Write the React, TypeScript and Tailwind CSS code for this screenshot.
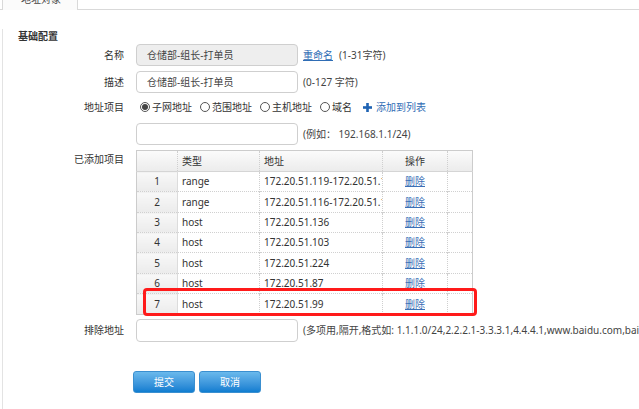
import React from "react";

const rows = [
  { n: 1, t: "range", a: "172.20.51.119-172.20.51.119", h: 20 },
  { n: 2, t: "range", a: "172.20.51.116-172.20.51.116", h: 21 },
  { n: 3, t: "host", a: "172.20.51.136", h: 20 },
  { n: 4, t: "host", a: "172.20.51.103", h: 20 },
  { n: 5, t: "host", a: "172.20.51.224", h: 21 },
  { n: 6, t: "host", a: "172.20.51.87", h: 20 },
  { n: 7, t: "host", a: "172.20.51.99", h: 21 },
];

function Radio({ checked, label }: { checked?: boolean; label: string }) {
  return (
    <span className="flex items-center">
      <span className="w-[10px] h-[10px] rounded-full border border-[#555] bg-white flex items-center justify-center">
        {checked && <span className="w-[6px] h-[6px] rounded-full bg-[#444]" />}
      </span>
      <span className="ml-[2px]">{label}</span>
    </span>
  );
}

function Label({ children, className = "" }: { children: React.ReactNode; className?: string }) {
  return <div className={"w-[124px] shrink-0 text-right " + className}>{children}</div>;
}

export default function App() {
  return (
    <div
      className="w-[639px] h-[409px] bg-white relative overflow-hidden text-[10px] text-[#333]"
      style={{ fontFamily: '"Noto Sans", "Noto Sans CJK SC", sans-serif' }}
    >
      {/* tab strip */}
      <div className="flex h-[10px]">
        <div className="w-[2px] border-b border-[#d9d9d9]" />
        <div className="w-[76px] h-[10px] overflow-hidden border-x border-[#d9d9d9] bg-[#fbfbfb]">
          <div className="-mt-[8px] leading-[14px] text-center pl-[2px] text-[#444]">地址对象</div>
        </div>
        <div className="flex-1 border-b border-[#d9d9d9]" />
      </div>

      <div className="border-l border-[#e3e3e3] ml-[2px] h-[399px]">
        <div className="-ml-[3px]">
          <div className="mt-[19px] leading-[14px] pl-[18px] font-bold text-[#333]">基础配置</div>

          {/* 名称 */}
          <div className="flex items-center mt-[1px] h-[22px]">
            <Label>名称</Label>
            <div className="ml-[12px] shrink-0 w-[162px] h-[22px] rounded-[4px] border border-[#cfcfcf] bg-[#eeeeee] flex items-center pl-[10px] text-[#444]">
              仓储部-组长-打单员
            </div>
            <span className="ml-[5px] text-[#2f6db5] underline">重命名</span>
            <span className="ml-[6px] text-[#444]">(1-31字符)</span>
          </div>

          {/* 描述 */}
          <div className="flex items-center mt-[5px] h-[22px]">
            <Label>描述</Label>
            <div className="ml-[12px] shrink-0 w-[162px] h-[22px] rounded-[4px] border border-[#cfcfcf] bg-white flex items-center pl-[10px] text-[#444]">
              仓储部-组长-打单员
            </div>
            <span className="ml-[5px] text-[#444]">(0-127 字符)</span>
          </div>

          {/* 地址项目 */}
          <div className="flex items-center mt-[5px] h-[18px]">
            <Label>地址项目</Label>
            <div className="ml-[16px] flex items-center gap-[8px]">
              <Radio checked label="子网地址" />
              <Radio label="范围地址" />
              <Radio label="主机地址" />
              <Radio label="域名" />
            </div>
            <svg className="ml-[11px]" width="9" height="9" viewBox="0 0 9 9">
              <rect x="3.2" y="0" width="2.6" height="9" fill="#1f63b3" />
              <rect x="0" y="3.2" width="9" height="2.6" fill="#1f63b3" />
            </svg>
            <span className="ml-[4px] text-[#2f6db5]">添加到列表</span>
          </div>

          {/* subnet input */}
          <div className="flex items-center mt-[7px] h-[22px]">
            <Label>{""}</Label>
            <div className="ml-[12px] shrink-0 w-[162px] h-[22px] rounded-[4px] border border-[#cfcfcf] bg-white" />
            <span className="ml-[5px] text-[#444]">(例如：&nbsp;192.168.1.1/24)</span>
          </div>

          {/* 已添加项目 */}
          <div className="flex mt-[5px]">
            <Label className="pt-[2px] leading-[14px]">已添加项目</Label>
            <div className="ml-[12px] relative shrink-0">
              <table className="border-collapse border border-[#cccccc] table-fixed w-[336px]">
                <colgroup>
                  <col className="w-[41px]" />
                  <col className="w-[82px]" />
                  <col className="w-[123px]" />
                  <col className="w-[65px]" />
                  <col className="w-[25px]" />
                </colgroup>
                <thead>
                  <tr className="h-[21px] bg-gradient-to-b from-[#fbfbfb] to-[#ececec] border-b border-[#d5d5d5]">
                    <th className="border-r border-dotted border-[#cfcfcf]" />
                    <th className="font-normal text-left pl-[4px] border-r border-dotted border-[#cfcfcf]">类型</th>
                    <th className="font-normal text-left pl-[4px] border-r border-dotted border-[#cfcfcf]">地址</th>
                    <th className="font-normal text-center border-r border-dotted border-[#cfcfcf]">操作</th>
                    <th />
                  </tr>
                </thead>
                <tbody>
                  {rows.map((r) => (
                    <tr key={r.n} style={{ height: r.h }} className="border-b border-dotted border-[#d0d0d0]">
                      <td className="text-center bg-gradient-to-b from-[#f8f8f8] to-[#ebebeb] border-r border-solid border-[#dcdcdc] p-0">
                        {r.n}
                      </td>
                      <td className="pl-[4px] border-r border-dotted border-[#cfcfcf] p-0">{r.t}</td>
                      <td className="pl-[4px] border-r border-dotted border-[#cfcfcf] p-0 overflow-hidden whitespace-nowrap">
                        {r.a}
                      </td>
                      <td className="text-center border-r border-dotted border-[#cfcfcf] p-0">
                        <span className="text-[#3b6fb6] underline">删除</span>
                      </td>
                      <td className="p-0" />
                    </tr>
                  ))}
                </tbody>
              </table>
              <div className="absolute left-[7px] top-[138px] w-[334px] h-[28px] border-[3px] border-[#ff1a1a] rounded-[4px]" />
            </div>
          </div>

          {/* 排除地址 */}
          <div className="flex items-center mt-[4px] h-[23px]">
            <Label>排除地址</Label>
            <div className="ml-[12px] shrink-0 w-[162px] h-[23px] rounded-[4px] border border-[#cfcfcf] bg-white" />
            <span className="ml-[5px] text-[#444] whitespace-nowrap">
              (多项用,隔开,格式如: 1.1.1.0/24,2.2.2.1-3.3.3.1,4.4.4.1,www.baidu.com,baidu.com)
            </span>
          </div>

          {/* buttons */}
          <div className="flex mt-[29px] pl-[133px] gap-[4px]">
            <button className="w-[62px] h-[22px] rounded-[3px] border border-[#3a8fd0] bg-gradient-to-b from-[#6ab9ec] to-[#0d7dd0] text-white text-[10px] flex items-center justify-center">
              提交
            </button>
            <button className="w-[62px] h-[22px] rounded-[3px] border border-[#3a8fd0] bg-gradient-to-b from-[#6ab9ec] to-[#0d7dd0] text-white text-[10px] flex items-center justify-center">
              取消
            </button>
          </div>
        </div>
      </div>
    </div>
  );
}
